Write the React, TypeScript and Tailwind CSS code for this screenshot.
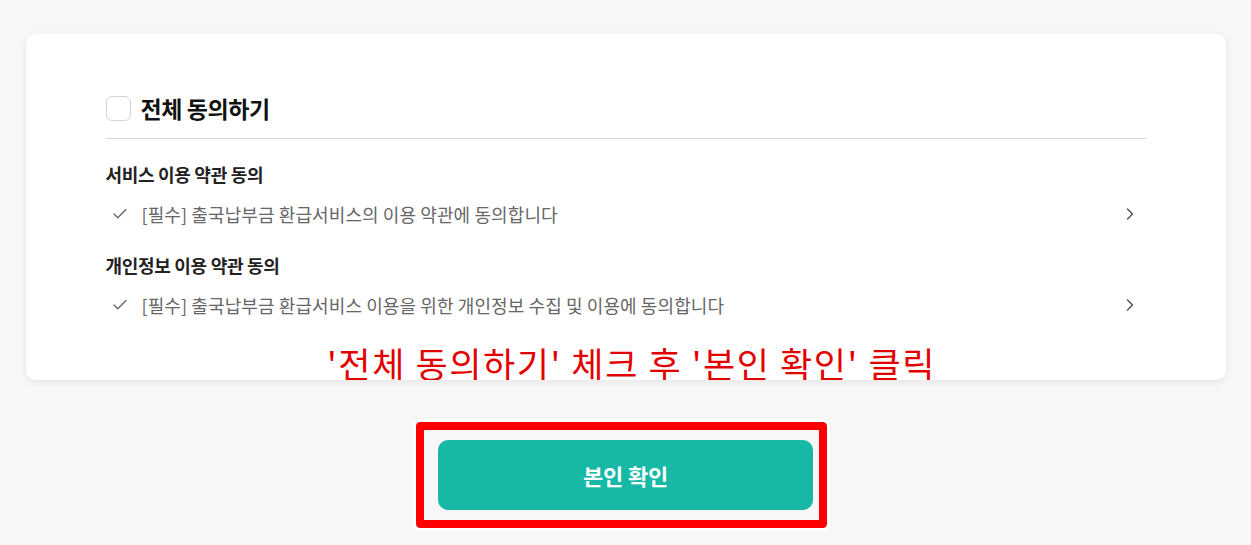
import { Check, ChevronRight } from "lucide-react"

const terms = [
    {
        title: "서비스 이용 약관 동의",
        item: "[필수] 출국납부금 환급서비스의 이용 약관에 동의합니다",
    },
    {
        title: "개인정보 이용 약관 동의",
        item: "[필수] 출국납부금 환급서비스 이용을 위한 개인정보 수집 및 이용에 동의합니다",
    },
]

export default function App() {
    return (
        <div
            className="min-h-screen bg-[#f7f7f7] pt-[34px]"
            style={{ fontFamily: '"Noto Sans CJK KR", "Noto Sans", sans-serif' }}
        >
            {/* Agreement card */}
            <div className="mx-auto w-[1200px] h-[346px] overflow-hidden rounded-[10px] bg-white shadow-[0_2px_8px_rgba(0,0,0,0.08)] px-[80px] pt-[62px]">
                <div className="flex items-center gap-[10px] h-[25px]">
                    <div className="w-[25px] h-[25px] rounded-[6px] border border-[#d4d4d4] bg-white" />
                    <span className="text-[23px] font-bold text-[#111] leading-none tracking-[-0.4px]">전체 동의하기</span>
                </div>
                <div className="mt-[17px] border-b border-[#d9d9d9]" />

                <div className="mt-[23px] flex flex-col">
                    {terms.map((t, i) => (
                        <div key={i} className={i > 0 ? "mt-[27px]" : ""}>
                            <div className="h-[24px] flex items-center text-[18px] font-bold text-[#222] tracking-[-0.3px]">
                                {t.title}
                            </div>
                            <div className="mt-[16px] h-[24px] flex items-center justify-between">
                                <div className="flex items-center">
                                    <Check className="ml-[5px] w-[18px] h-[18px] text-[#666]" strokeWidth={1.8} />
                                    <span className="ml-[13px] text-[18px] text-[#666] tracking-[0.1px]">{t.item}</span>
                                </div>
                                <ChevronRight className="mr-[6px] w-[20px] h-[20px] text-[#555]" strokeWidth={1.8} />
                            </div>
                        </div>
                    ))}
                </div>

                <div className="mt-[26px] h-[40px] flex justify-center pl-[12px]">
                    <span className="text-[35px] leading-[40px] text-[#e30000] tracking-[1.6px] whitespace-nowrap">
                        '전체 동의하기' 체크 후 '본인 확인' 클릭
                    </span>
                </div>
            </div>

            {/* Confirm button with highlight box */}
            <div className="mt-[42px] flex justify-center pr-[8px]">
                <div className="rounded-[4px] border-[8px] border-[#ff0000] outline-[3px] outline-solid outline-white pl-[14px] pr-[6px] py-[10px]">
                    <button className="w-[375px] h-[70px] rounded-[10px] bg-[#18b8a6] text-white text-[22px] font-bold tracking-[-0.2px]">
                        본인 확인
                    </button>
                </div>
            </div>
        </div>
    )
}
